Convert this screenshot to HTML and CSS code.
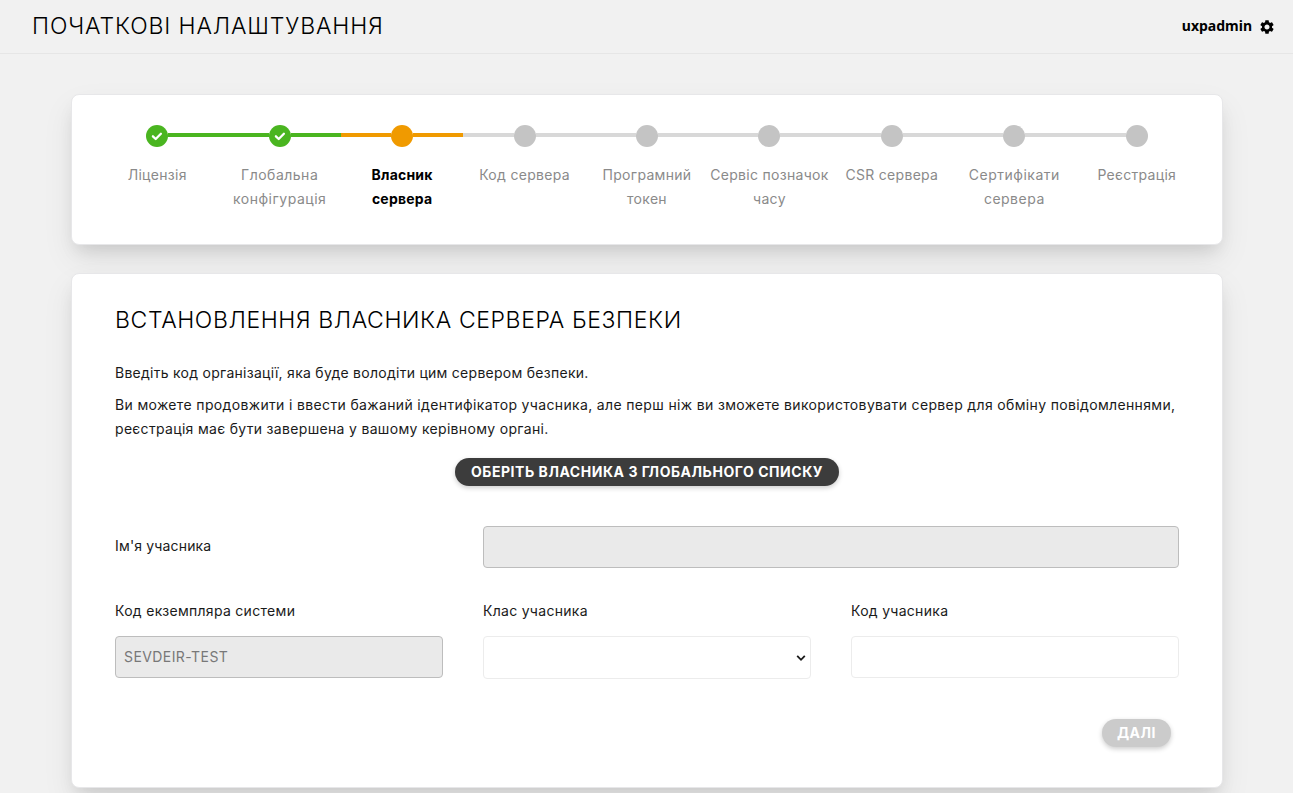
FILE: index.html
```html
<!DOCTYPE html>
<html lang="uk">
<head>
<meta charset="utf-8">
<title>Початкові налаштування</title>
<link rel="stylesheet" href="styles.css">
</head>
<body>
<header class="topbar">
  <h1 class="page-title"><span>ПОЧАТКОВІ НАЛАШТУВАННЯ</span></h1>
  <div class="user">
    <span class="user-name">uxpadmin</span>
    <svg class="gear" viewBox="2 2 20 20" width="14" height="14"><path d="M19.14 12.94c.04-.3.06-.61.06-.94 0-.32-.02-.64-.07-.94l2.03-1.58c.18-.14.23-.41.12-.61l-1.92-3.32c-.12-.22-.37-.29-.59-.22l-2.39.96c-.5-.38-1.03-.7-1.62-.94l-.36-2.54c-.04-.24-.24-.41-.48-.41h-3.84c-.24 0-.43.17-.47.41l-.36 2.54c-.59.24-1.13.57-1.62.94l-2.39-.96c-.22-.08-.47 0-.59.22L2.74 8.87c-.12.21-.08.47.12.61l2.03 1.58c-.05.3-.09.63-.09.94s.02.64.07.94l-2.03 1.58c-.18.14-.23.41-.12.61l1.92 3.32c.12.22.37.29.59.22l2.39-.96c.5.38 1.03.7 1.62.94l.36 2.54c.05.24.24.41.48.41h3.84c.24 0 .44-.17.47-.41l.36-2.54c.59-.24 1.13-.56 1.62-.94l2.39.96c.22.08.47 0 .59-.22l1.92-3.32c.12-.22.07-.47-.12-.61l-2.01-1.58zM12 15.6c-1.98 0-3.6-1.62-3.6-3.6s1.62-3.6 3.6-3.6 3.6 1.62 3.6 3.6-1.62 3.6-3.6 3.6z"/></svg>
  </div>
</header>
<main class="content">
  <ol class="card steps">
    <li class="step done"><div class="track"><i class="line blank"></i><span class="dot"><svg viewBox="0 0 22 22" width="22" height="22"><path d="M6.9 11.3l2.8 2.7 5.2-5.3"/></svg></span><i class="line"></i></div><span class="step-label">Ліцензія</span></li>
    <li class="step done"><div class="track"><i class="line"></i><span class="dot"><svg viewBox="0 0 22 22" width="22" height="22"><path d="M6.9 11.3l2.8 2.7 5.2-5.3"/></svg></span><i class="line"></i></div><span class="step-label wide">Глобальна<br>конфігурація</span></li>
    <li class="step current"><div class="track"><i class="line"></i><span class="dot"></span><i class="line"></i></div><span class="step-label">Власник<br>сервера</span></li>
    <li class="step"><div class="track"><i class="line"></i><span class="dot"></span><i class="line"></i></div><span class="step-label">Код сервера</span></li>
    <li class="step"><div class="track"><i class="line"></i><span class="dot"></span><i class="line"></i></div><span class="step-label">Програмний<br>токен</span></li>
    <li class="step"><div class="track"><i class="line"></i><span class="dot"></span><i class="line"></i></div><span class="step-label">Сервіс позначок<br>часу</span></li>
    <li class="step"><div class="track"><i class="line"></i><span class="dot"></span><i class="line"></i></div><span class="step-label">CSR сервера</span></li>
    <li class="step"><div class="track"><i class="line"></i><span class="dot"></span><i class="line"></i></div><span class="step-label wide">Сертифікати<br>сервера</span></li>
    <li class="step"><div class="track"><i class="line"></i><span class="dot"></span><i class="line blank"></i></div><span class="step-label">Реєстрація</span></li>
  </ol>
  <form class="card owner">
    <h2 class="owner-title"><span>ВСТАНОВЛЕННЯ ВЛАСНИКА СЕРВЕРА БЕЗПЕКИ</span></h2>
    <p class="text intro">Введіть код організації, яка буде володіти цим сервером безпеки.</p>
    <p class="text"><span class="long">Ви можете продовжити і ввести бажаний ідентифікатор учасника, але перш ніж ви зможете використовувати сервер для обміну повідомленнями,</span><br>реєстрація має бути завершена у вашому керівному органі.</p>
    <button type="button" class="button pick"><span>ОБЕРІТЬ ВЛАСНИКА З ГЛОБАЛЬНОГО СПИСКУ</span></button>
    <div class="fields">
      <label class="label name-label" for="name">Ім'я учасника</label>
      <input class="input name-input" id="name" disabled>
      <div class="field"><label class="label" for="instance">Код екземпляра системи</label><input class="input" id="instance" value="SEVDEIR-TEST" disabled></div>
      <div class="field"><label class="label" for="class">Клас учасника</label><div class="select" id="class"><svg viewBox="0 0 10 8" width="10" height="8"><path d="M1.2 1.8L5 5.8l3.8-4"/></svg></div></div>
      <div class="field"><label class="label" for="code">Код учасника</label><input class="input" id="code"></div>
    </div>
    <button type="button" class="button next" disabled>ДАЛІ</button>
  </form>
</main>
</body>
</html>
```

FILE: styles.css
```css
* { box-sizing: border-box; }
body {
  margin: 0;
  height: 793px;
  overflow: hidden;
  background: #f1f1f1;
  color: #1a1a1a;
  font: 14px/24px Inter, "Noto Sans", sans-serif;
}
h1, h2, p, ol { margin: 0; padding: 0; }
.topbar {
  height: 54px;
  padding: 0 19px 0 32px;
  display: flex;
  justify-content: space-between;
  border-bottom: 1px solid #e6e6e6;
}
.page-title, .owner-title {
  color: #000;
  font-size: 23px;
  font-weight: 300;
  line-height: 32px;
  white-space: nowrap;
}
.page-title { padding-top: 10px; letter-spacing: .87px; }
.user { display: flex; align-items: center; gap: 8px; height: 53px; color: #000; }
.user-name { padding-bottom: 2px; font: 700 14px/20px "Noto Sans", sans-serif; }
.content { padding: 40px 70px 0 71px; }
.card {
  background: #fff;
  border: 1px solid #e7e7e9;
  border-radius: 8px;
  box-shadow: 0 14px 32px rgba(0, 0, 0, .07), 0 10px 18px -6px rgba(0, 0, 0, .13);
}
.steps {
  height: 151px;
  margin-bottom: 28px;
  padding: 30px 24px 0;
  display: grid;
  grid-template-columns: repeat(9, 1fr);
  list-style: none;
  color: #8a8a8a;
}
.step { text-align: center; }
.track { display: flex; height: 22px; margin-bottom: 16px; }
.line { flex: 1; height: 4px; margin-top: 8px; background: #d8d8d8; }
.dot { width: 22px; height: 22px; border-radius: 50%; background: #c4c4c4; }
.dot svg { display: block; fill: none; stroke: #fff; stroke-width: 2.3; stroke-linecap: round; stroke-linejoin: round; }
.done .line, .done .dot { background: #4ab520; }
.current .line, .current .dot { background: #f09a00; }
.step .blank { background: none; }
.step-label { white-space: nowrap; letter-spacing: .3px; }
.step-label.wide { letter-spacing: .5px; }
.current .step-label { color: #000; font-weight: 700; letter-spacing: .2px; }
.owner { height: 515px; padding: 30px 43px 0; }
.owner-title { letter-spacing: .6px; margin-bottom: 25px; }
.text { white-space: nowrap; letter-spacing: .32px; }
.intro { letter-spacing: .27px; margin-bottom: 8px; }
.long { letter-spacing: .35px; }
.button {
  display: block;
  height: 28px;
  padding: 0 0 1px;
  border: 0;
  border-radius: 14px;
  box-shadow: 0 2px 5px rgba(0, 0, 0, .2);
  color: #fff;
  font: 700 14px/24px Inter, sans-serif;
  letter-spacing: .54px;
  white-space: nowrap;
}
.pick { width: 384px; margin: 17px auto 40px; background: #3c3c3c; }
.next { width: 69px; margin: 40px 8px 0 auto; background: #cbcbcb; }
.fields {
  display: grid;
  grid-template-columns: repeat(3, 328px);
  column-gap: 40px;
  row-gap: 31px;
}
.name-label { padding-top: 8px; letter-spacing: .17px; }
.name-input { grid-column: span 2; }
.field .label { display: block; height: 24px; margin-bottom: 13px; letter-spacing: .3px; }
.input, .select {
  display: block;
  width: 100%;
  height: 42px;
  padding: 0 8px 2px;
  border: 1px solid #ececec;
  border-radius: 4px;
  background: #fff;
  font: 14px/24px Inter, sans-serif;
  letter-spacing: .42px;
}
.input:disabled { background: #eaeaea; border-color: #bdbdbd; color: #787878; }
.select { display: flex; height: 43px; align-items: center; justify-content: flex-end; padding: 0 4px; }
.select svg { fill: none; stroke: #1a1a1a; stroke-width: 1.8; }
```
